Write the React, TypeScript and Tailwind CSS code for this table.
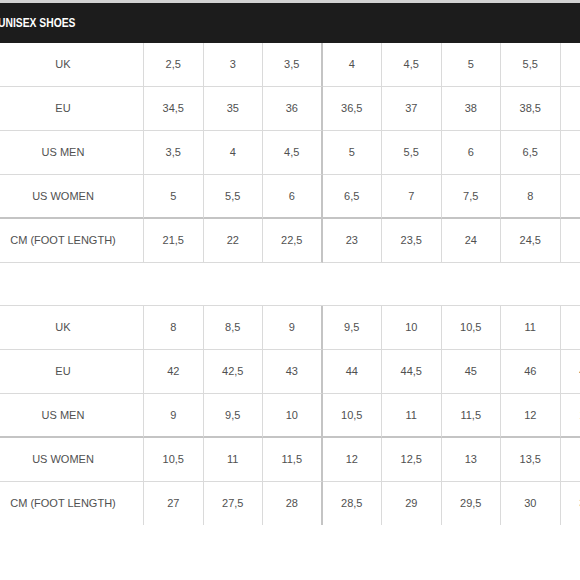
import React from 'react';

const labels = ["UK", "EU", "US MEN", "US WOMEN", "CM (FOOT LENGTH)"];

const tableOne = [
  ["2,5", "3", "3,5", "4", "4,5", "5", "5,5", "6"],
  ["34,5", "35", "36", "36,5", "37", "38", "38,5", "39"],
  ["3,5", "4", "4,5", "5", "5,5", "6", "6,5", "7"],
  ["5", "5,5", "6", "6,5", "7", "7,5", "8", "8,5"],
  ["21,5", "22", "22,5", "23", "23,5", "24", "24,5", "25"],
];

const tableTwo = [
  ["8", "8,5", "9", "9,5", "10", "10,5", "11", "11,5"],
  ["42", "42,5", "43", "44", "44,5", "45", "46", "46,5"],
  ["9", "9,5", "10", "10,5", "11", "11,5", "12", "12,5"],
  ["10,5", "11", "11,5", "12", "12,5", "13", "13,5", "14"],
  ["27", "27,5", "28", "28,5", "29", "29,5", "30", "30,5"],
];

function SizeTable({ rows, last, thickRow }: { rows: string[][]; last: boolean; thickRow: number }) {
  return (
    <div className="ml-[-17px] grid grid-cols-[161px_repeat(7,59.5px)_60px] w-max">
      {rows.map((row, r) => {
        const noBottom = last && r === rows.length - 1;
        const rowBorder = noBottom
          ? "border-b-0 h-[43px]"
          : r === thickRow
          ? "border-b-2 border-b-[#c4c4c4] h-[44px]"
          : "border-b border-b-[#dadada] h-[44px]";
        return (
          <React.Fragment key={r}>
            <div className={`flex items-center justify-center border-r border-r-[#dadada] ${rowBorder}`}>
              {labels[r]}
            </div>
            {row.map((v, c) => (
              <div
                key={c}
                className={`flex items-center justify-center ${rowBorder} ${
                  c === 2 ? "border-r-2 border-r-[#c4c4c4]" : "border-r border-r-[#dadada]"
                }`}
              >
                {v}
              </div>
            ))}
          </React.Fragment>
        );
      })}
    </div>
  );
}

export default function App() {
  return (
    <div className="w-[580px] h-[580px] overflow-hidden bg-white border-t-[3px] border-t-[#d2d2d2] font-['Liberation_Sans',Arial,sans-serif] text-[11px] text-[#505050]">
      <div className="h-[40px] bg-[#1c1c1c] flex items-center">
        <span className="inline-block origin-left scale-x-[0.86] ml-[-2px] font-['Liberation_Sans',Arial,sans-serif] font-bold text-[12px] text-white">
          UNISEX SHOES
        </span>
      </div>
      <SizeTable rows={tableOne} last={false} thickRow={3} />
      <div className="mt-[42px] border-t border-t-[#dadada]">
        <SizeTable rows={tableTwo} last={true} thickRow={2} />
      </div>
    </div>
  );
}
